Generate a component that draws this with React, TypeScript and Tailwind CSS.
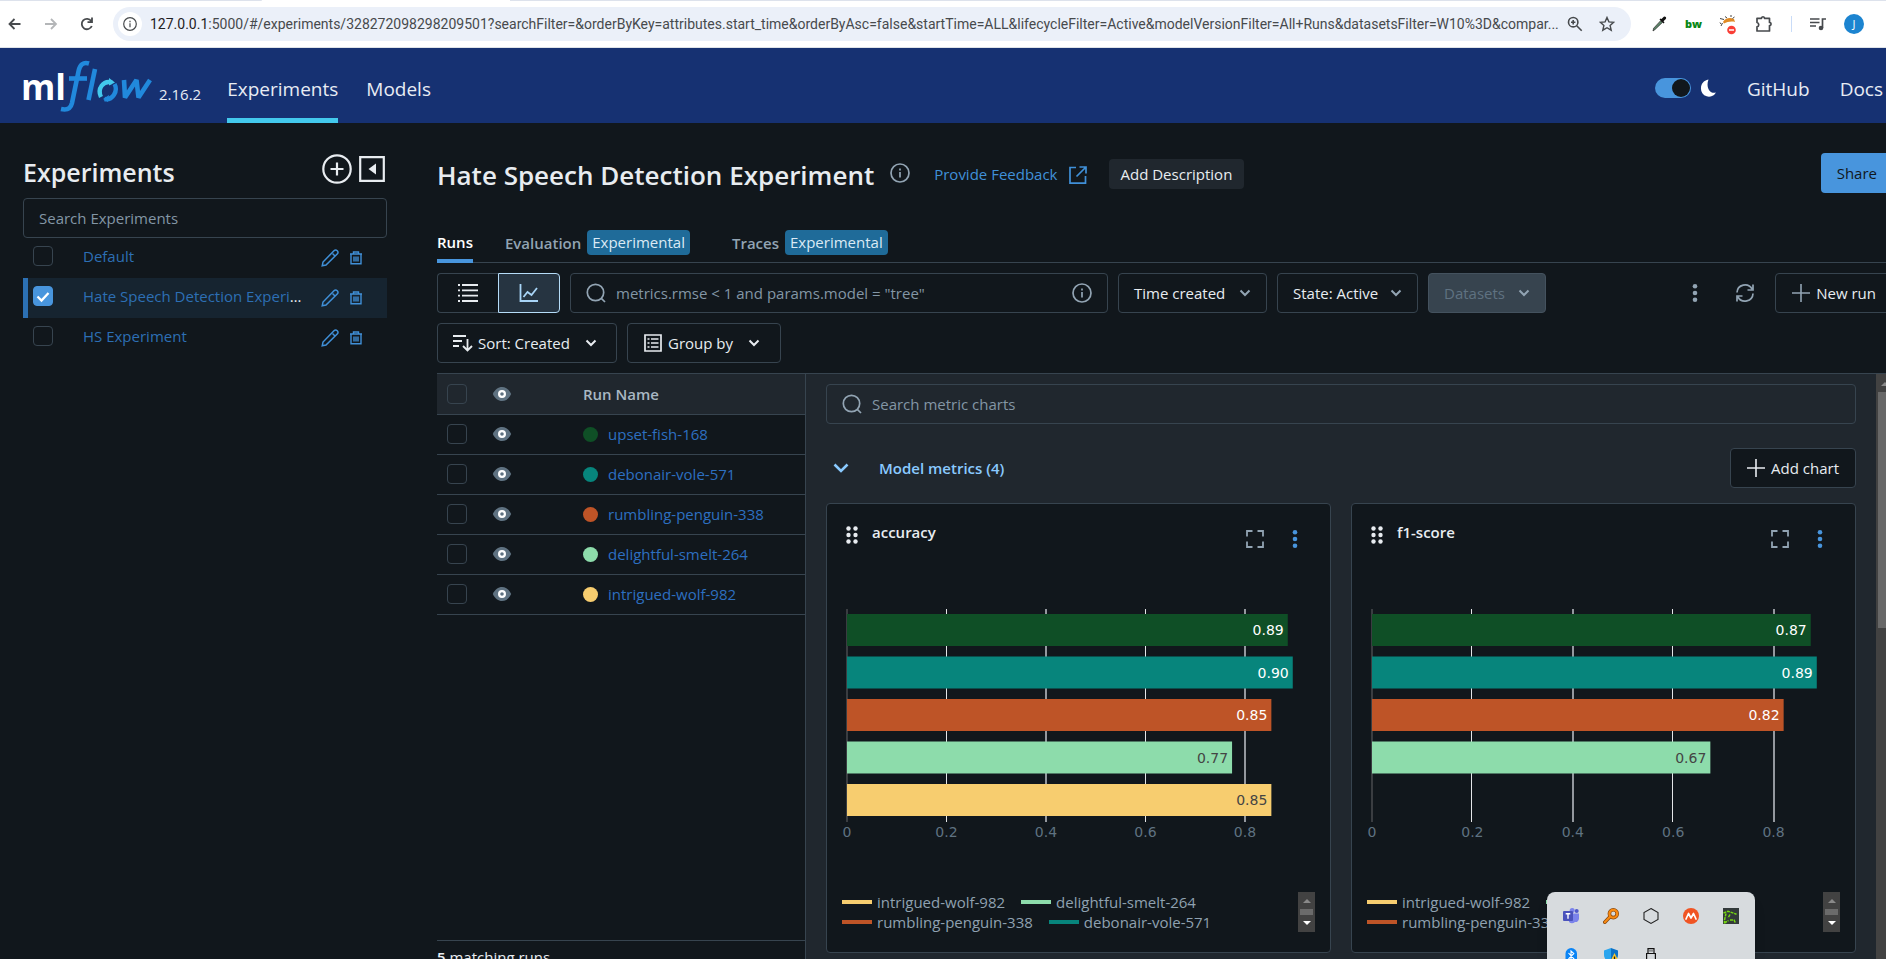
import React from 'react';

type Run = { name: string; color: string; ink: string };

const RUNS: Run[] = [
  { name: 'upset-fish-168', color: '#0f4f26', ink: '#ffffff' },
  { name: 'debonair-vole-571', color: '#07857c', ink: '#ffffff' },
  { name: 'rumbling-penguin-338', color: '#be5427', ink: '#ffffff' },
  { name: 'delightful-smelt-264', color: '#8ddcab', ink: '#444444' },
  { name: 'intrigued-wolf-982', color: '#f7cd6f', ink: '#444444' },
];

const EXPERIMENTS = [
  { name: 'Default', active: false },
  { name: 'Hate Speech Detection Experiment', active: true },
  { name: 'HS Experiment', active: false },
];

const BOX =
  'size-5 shrink-0 appearance-none rounded border border-[#37444f] bg-transparent';
const BTN =
  'flex h-10 shrink-0 items-center rounded border border-[#37444f] px-4 text-[15px] text-[#e8ecf0]';

function Chevron({ className }: { className: string }) {
  return (
    <svg viewBox="0 0 12 12" className={className} fill="none" stroke="currentColor" strokeWidth="2" aria-hidden="true">
      <path d="M1.500 3.500 6 8l4.500-4.500" />
    </svg>
  );
}

function InfoIcon({ className }: { className: string }) {
  return (
    <svg viewBox="0 0 20 20" className={className} fill="none" stroke="currentColor" strokeWidth="1.700" aria-hidden="true">
      <circle cx="10" cy="10" r="9" />
      <path d="M10 9v5.500M10 5.500v2" />
    </svg>
  );
}

function SearchIcon() {
  return (
    <svg viewBox="0 0 20 20" className="size-5 shrink-0 text-[#92a4b3]" fill="none" stroke="currentColor" strokeWidth="1.700" aria-hidden="true">
      <circle cx="9.500" cy="9.500" r="8.200" />
      <path d="m15.300 15.300 3.700 3.700" />
    </svg>
  );
}

function PlusIcon({ className }: { className: string }) {
  return (
    <svg viewBox="0 0 18 18" className={className} stroke="currentColor" strokeWidth="1.600" aria-hidden="true">
      <path d="M9 0v18M0 9h18" />
    </svg>
  );
}

function Kebab({ className }: { className: string }) {
  return (
    <svg viewBox="0 0 6 20" className={className} fill="currentColor" aria-hidden="true">
      <circle cx="3" cy="3.300" r="2.300" />
      <circle cx="3" cy="10" r="2.300" />
      <circle cx="3" cy="16.700" r="2.300" />
    </svg>
  );
}

function Eye() {
  return (
    <svg viewBox="0 0 20 16" className="h-4 w-5" aria-hidden="true">
      <path d="M.8 8C3 3.300 6.300 1 10 1s7 2.300 9.200 7C17 12.700 13.700 15 10 15S3 12.700.8 8Z" fill="#5f7281" />
      <circle cx="10" cy="8" r="2.900" fill="none" stroke="#fff" strokeWidth="2.200" />
    </svg>
  );
}

function BrowserBar() {
  return (
    <div className="shrink-0 border-b border-[#dfe3e8] bg-white">
      <div className="flex h-px">
        <div className="w-[262px] rounded-br bg-[#dde2ec]" />
        <div className="w-[248px]" />
        <div className="flex-1 bg-[#dde2ec]" />
      </div>
      <div className="flex h-[46px] items-center text-[#474a4d]">
        <button aria-label="Back" className="ml-[7px] size-4">
          <svg viewBox="0 0 16 16" fill="none" stroke="currentColor" strokeWidth="1.800"><path d="M13.500 8H2.500M7.500 3 2.500 8l5 5" /></svg>
        </button>
        <button aria-label="Forward" className="ml-5 size-4 text-[#b4b6b8]">
          <svg viewBox="0 0 16 16" fill="none" stroke="currentColor" strokeWidth="1.800"><path d="M2 8h11M8 3l5 5-5 5" /></svg>
        </button>
        <button aria-label="Reload" className="ml-5 size-4">
          <svg viewBox="0 0 16 16" fill="none" stroke="currentColor" strokeWidth="1.800"><path d="M12.800 10a5.200 5.200 0 1 1-.6-5M13 1.500v4.700H8.500" /></svg>
        </button>
        <div className="ml-[18px] flex h-[34px] min-w-0 flex-1 items-center rounded-full bg-[#ebf0f9] pr-4">
          <span className="ml-[5px] flex size-6 shrink-0 items-center justify-center rounded-full bg-white">
            <InfoIcon className="size-[14px]" />
          </span>
          <p className="ml-2 min-w-0 flex-1 overflow-hidden font-[Roboto,sans-serif] text-[14px] whitespace-nowrap">
            <span className="text-[#1f2124]">127.0.0.1</span>
            :5000/#/experiments/328272098298209501?searchFilter=&amp;orderByKey=attributes.start_time&amp;orderByAsc=false&amp;startTime=ALL&amp;lifecycleFilter=Active&amp;modelVersionFilter=All+Runs&amp;datasetsFilter=W10%3D&amp;compar...
          </p>
          <button aria-label="Zoom" className="ml-1 size-4">
            <svg viewBox="0 0 16 16" fill="none" stroke="currentColor" strokeWidth="1.600"><circle cx="6.200" cy="6.200" r="4.700" /><path d="m9.700 9.700 5 5M6.200 4v4.400M4 6.200h4.400" /></svg>
          </button>
          <button aria-label="Bookmark" className="ml-4 size-4">
            <svg viewBox="0 0 16 16" fill="none" stroke="currentColor" strokeWidth="1.400"><path d="m8 1.500 1.900 4.400 4.800.4-3.600 3.200 1.100 4.700L8 11.700l-4.200 2.500 1.100-4.700L1.300 6.300l4.800-.4Z" /></svg>
          </button>
        </div>
        <div className="ml-5 flex items-center gap-[18px] pr-[22px]">
          <svg viewBox="0 0 16 16" className="size-4" aria-hidden="true">
            <path d="m2 15 .7-2.800 7-7.500 1.700 1.700-7.300 7Z" fill="#5e8a6c" stroke="#333" strokeWidth=".8" />
            <path d="m8.500 3.500 4 4 1-1-1-1.200 2.300-2.300a1.500 1.500 0 0 0-2-2.200l-2.300 2.300-1-.7Z" fill="#111" />
          </svg>
          <span className="w-4 text-[11px] leading-4 font-extrabold text-[#0a8716]">bw</span>
          <svg viewBox="0 0 18 22" className="h-[22px] w-[18px]" aria-hidden="true">
            <path d="M4 9c2-4 7-5 11-3l1 3c-4-1-8 0-11 1.500Z" fill="#e08a24" />
            <path d="M1 5.500l4 1M2 13l1.500-3M6 3.500l2 1.500M12 2v2M15.500 4l-2 1.500M1 9.500l1 1.500" stroke="#444" strokeWidth="1" />
            <circle cx="12.500" cy="17" r="4.300" fill="#f93e36" />
            <path d="M10 17h5" stroke="#fff" strokeWidth="1.500" />
          </svg>
          <svg viewBox="0 0 18 18" className="size-[18px]" fill="none" stroke="currentColor" strokeWidth="1.700" strokeLinejoin="round" aria-hidden="true">
            <path d="M2 3.300h4.500V2.800a1.600 1.600 0 0 1 3 0v.5H14.500v4.200h.5a1.600 1.600 0 0 1 0 3h-.5V16H2v-4.200a2.200 2.200 0 0 0 0-4.300Z" />
          </svg>
          <span className="h-4 w-px bg-[#c9dcf8]" />
          <svg viewBox="0 0 16 16" className="size-4" fill="none" stroke="currentColor" strokeWidth="1.700" aria-hidden="true">
            <path d="M0 3h9.500M0 6.500h9.500M0 10h6M12.500 12V3H16" />
            <circle cx="11" cy="12" r="2.300" fill="currentColor" stroke="none" />
          </svg>
          <span className="flex size-5 items-center justify-center rounded-full bg-[#1c84d0] text-[11px] text-white">J</span>
        </div>
      </div>
    </div>
  );
}

function Logo() {
  return (
    <svg viewBox="0 0 130 52" className="h-[52px] w-[130px]" role="img" aria-label="mlflow">
      <text x="-2" y="40" fill="#fff" fontFamily="Open Sans, sans-serif" fontWeight="700" fontSize="35">ml</text>
      <g fill="none" stroke="#2189dc" strokeWidth="4.600">
        <path d="M66 3.500c-6-1.800-9 1.500-10.300 7L49 43c-1.200 5-4 7.500-11 6" />
        <path d="M46 18.500h18" />
        <path d="m72 9-6.500 31" />
        <path d="M101 20l1 17.500L113.500 20l2 17.500L127 20" strokeLinejoin="bevel" />
      </g>
      <g fill="none" strokeWidth="4.400">
        <path d="M78 37c-4-8 2-17 11-14.500" stroke="#43c9ed" />
        <path d="M91.500 24c4 7-2 16.500-10 15" stroke="#2189dc" />
      </g>
      <path d="m86 18 6 4.500-6 3Z" fill="#43c9ed" />
      <path d="m86 35-6 4 5 3Z" fill="#2189dc" />
    </svg>
  );
}

function Header() {
  return (
    <header className="flex h-[75px] shrink-0 bg-[#163172] pl-[23px] text-[19px] text-[#e8ecf4]">
      <div className="mt-3 flex h-[52px]">
        <Logo />
        <span className="mt-6 ml-[6px] text-[15px] leading-5">2.16.2</span>
      </div>
      <nav className="ml-[26px] flex gap-[28px]">
        <a href="#experiments" className="flex items-center border-b-[5px] border-[#43c9ed] pt-[13px]">Experiments</a>
        <a href="#models" className="flex items-center border-b-[5px] border-transparent pt-[13px]">Models</a>
      </nav>
      <div className="ml-auto flex items-center gap-[30px] pt-2 pr-[3px]">
        <div className="flex items-center gap-2 pb-[3px]">
          <button role="switch" aria-checked="true" aria-label="Dark mode" className="flex h-5 w-9 justify-end rounded-full bg-[#4895dd] p-px">
            <span className="size-[18px] rounded-full bg-[#11171c]" />
          </button>
          <svg viewBox="0 0 18 18" className="size-[18px]" fill="#fff" aria-hidden="true">
            <path d="M9.500.5C4.500 1.500 2 5 2 9a8 8 0 0 0 15 4.500C11 15.500 6.500 8.500 9.500.5Z" />
          </svg>
        </div>
        <a href="#github">GitHub</a>
        <a href="#docs">Docs</a>
      </div>
    </header>
  );
}

function Sidebar() {
  return (
    <aside className="w-[387px] shrink-0 pt-[31px] pl-[23px]">
      <div className="flex h-11 items-start">
        <h2 className="text-[25px] leading-9 font-semibold">Experiments</h2>
        <button aria-label="New experiment" className="ml-auto size-[30px]">
          <svg viewBox="0 0 30 30" fill="none" stroke="#e8ecf0" strokeWidth="2.200"><circle cx="15" cy="15" r="13.700" /><path d="M15 8.500v13M8.500 15h13" /></svg>
        </button>
        <button aria-label="Collapse sidebar" className="mt-[2px] ml-[7px] mr-[2px] size-[26px]">
          <svg viewBox="0 0 26 26" fill="none" stroke="#e8ecf0" strokeWidth="2.200"><path d="M1.200 1.200h23.600v23.600H1.200Z" /><path d="M17 7.500v11L9.500 13Z" fill="#e8ecf0" stroke="none" /></svg>
        </button>
      </div>
      <input
        aria-label="Search Experiments"
        placeholder="Search Experiments"
        className="h-10 w-full rounded border border-[#37444f] bg-transparent px-[15px] text-[15px] placeholder:text-[#8396a5]"
      />
      <ul>
        {EXPERIMENTS.map((e) => (
          <li
            key={e.name}
            className={
              e.active
                ? 'flex h-10 items-start border-l-[5px] border-[#2c70b3] bg-[#162430] pt-2 pl-[5px]'
                : 'flex h-10 items-start border-l-[5px] border-transparent pt-2 pl-[5px]'
            }
          >
            <span className="relative size-5 shrink-0">
              <input
                type="checkbox"
                aria-label={e.name}
                defaultChecked={e.active}
                className="block size-5 appearance-none rounded border border-[#37444f] checked:border-[#4895dd] checked:bg-[#4895dd]"
              />
              {e.active && (
                <svg viewBox="0 0 20 20" className="pointer-events-none absolute inset-0 size-5" fill="none" stroke="#fff" strokeWidth="2.300" aria-hidden="true">
                  <path d="m4.500 10.500 4 4 7-7.500" />
                </svg>
              )}
            </span>
            <div className="ml-[30px] w-[229px] truncate text-[15px] leading-5">
              <a href="#experiment" className="text-[#2d6fb4]">{e.name}</a>
            </div>
            <button aria-label={'Rename ' + e.name} className="mt-[3px] ml-[9px] size-[18px] text-[#4090d8]">
              <svg viewBox="0 0 18 18" fill="none" stroke="currentColor" strokeWidth="1.500"><path d="M1.200 16.800 2 13 13 1.800a2.200 2.200 0 0 1 3.200 3.200L5 16Z" /><path d="m11.500 4.500 2.700 2.700" /></svg>
            </button>
            <button aria-label={'Delete ' + e.name} className="mt-[4px] ml-[9px] size-4 text-[#4090d8]">
              <svg viewBox="0 0 16 16" fill="none" stroke="currentColor" strokeWidth="1.400"><path d="M2 4h12M5.500 4V2h5v2M3 4v9.800h10V4M6 6.500v5M8 6.500v5M10 6.500v5" /></svg>
            </button>
          </li>
        ))}
      </ul>
    </aside>
  );
}

function Badge() {
  return (
    <span className="ml-[6px] flex h-[25px] items-center rounded bg-[#1f6b99] px-[5px] font-medium text-[#dbeaf5]">Experimental</span>
  );
}

function TitleRow() {
  return (
    <div className="flex h-10 items-center">
      <h1 className="mt-[5px] text-[26px] font-semibold whitespace-nowrap">Hate Speech Detection Experiment</h1>
      <InfoIcon className="ml-4 size-5 text-[#92a4b3]" />
      <a href="#feedback" className="mt-[3px] ml-6 flex items-center gap-[11px] text-[15px] text-[#4090d8]">
        Provide Feedback
        <svg viewBox="0 0 18 18" className="size-[18px]" fill="none" stroke="currentColor" strokeWidth="1.700" aria-hidden="true">
          <path d="M7 1.500H1v15.700h15.500V10M10.500 1H17v6.500M17 1 7.500 10.500" />
        </svg>
      </a>
      <button className="ml-[22px] mt-[2px] h-[30px] rounded bg-[#20272e] px-3 text-[15px]">Add Description</button>
      <button className="ml-auto h-10 rounded bg-[#4895dd] px-4 text-[15px] text-[#11171c]">Share</button>
    </div>
  );
}

function Tabs() {
  return (
    <div role="tablist" className="mt-9 flex h-[34px] border-b border-[#37444f] text-[15px] leading-[27px] font-semibold text-[#92a4b3]">
      <button role="tab" aria-selected="true" className="h-[34px] border-b-4 border-[#4895dd] pb-[3px] text-white">Runs</button>
      <button role="tab" aria-selected="false" className="ml-8 flex pt-px">Evaluation<Badge /></button>
      <button role="tab" aria-selected="false" className="ml-[42px] flex pt-px">Traces<Badge /></button>
    </div>
  );
}

function Toolbar() {
  return (
    <>
      <div className="mt-[10px] flex items-center">
        <div className="flex h-10 w-[123px] shrink-0">
          <button aria-label="Table view" className="flex flex-1 items-center justify-center rounded-l border border-r-0 border-[#37444f]">
            <svg viewBox="0 0 20 18" className="h-[18px] w-5" stroke="#e8ecf0" strokeWidth="1.800" aria-hidden="true">
              <path d="M4 1h16M4 6.300h16M4 11.600h16M4 17h16M0 1h2M0 6.300h2M0 11.600h2M0 17h2" />
            </svg>
          </button>
          <button aria-label="Chart view" className="flex flex-1 items-center justify-center rounded-r border border-[#b5dcf8] bg-[#263441]">
            <svg viewBox="0 0 20 18" className="h-[18px] w-5" fill="none" stroke="#a9d5f7" strokeWidth="1.800" aria-hidden="true">
              <path d="M1.500 0v17H19M4.500 13l4-5 4 3 5.500-7" />
            </svg>
          </button>
        </div>
        <label className="ml-[10px] flex h-10 w-[538px] items-center rounded border border-[#37444f] px-[15px]">
          <SearchIcon />
          <input aria-label="Filter runs" placeholder={'metrics.rmse < 1 and params.model = "tree"'} className="ml-[10px] min-w-0 flex-1 bg-transparent text-[15px] placeholder:text-[#8396a5]" />
          <InfoIcon className="size-5 text-[#92a4b3]" />
        </label>
        <button className={BTN + ' ml-[10px] w-[149px] justify-between px-[15px]'}>Time created<Chevron className="size-3 text-[#92a4b3]" /></button>
        <button className={BTN + ' ml-[10px] w-[141px] justify-between px-[15px]'}>State: Active<Chevron className="size-3 text-[#92a4b3]" /></button>
        <button disabled className="ml-[10px] flex h-10 w-[118px] shrink-0 items-center justify-between rounded border border-[#44525e] bg-[#37444f] px-[15px] text-[15px] text-[#5f7281]">Datasets<Chevron className="size-3 text-[#92a4b3]" /></button>
        <button aria-label="More actions" className="ml-auto text-[#92a4b3]"><Kebab className="h-5 w-[6px]" /></button>
        <button aria-label="Refresh" className="ml-[37px] text-[#92a4b3]">
          <svg viewBox="0 0 20 20" className="size-5" fill="none" stroke="currentColor" strokeWidth="1.700" aria-hidden="true">
            <path d="M2 9.500a8 8 0 0 1 15-3.500M18 1.500V7h-5.500M18 10.500a8 8 0 0 1-15 3.500M2 18.500V13h5.500" />
          </svg>
        </button>
        <button className={BTN + ' ml-5'}><PlusIcon className="mr-[6px] size-[18px] text-[#92a4b3]" />New run</button>
      </div>
      <div className="mt-[10px] flex gap-[10px]">
        <button className={BTN + ' w-[180px] px-[15px]'}>
          <svg viewBox="0 0 20 18" className="mr-[5px] h-[18px] w-5" fill="none" stroke="#e8ecf0" strokeWidth="1.800" aria-hidden="true">
            <path d="M0 2h13M0 7h9M0 12h6M14.500 5v11M10 12l4.500 4.500L19 12" />
          </svg>
          Sort: Created
          <Chevron className="ml-[15px] size-3" />
        </button>
        <button className={BTN + ' w-[154px] px-4'}>
          <svg viewBox="0 0 18 18" className="mr-[6px] size-[18px]" fill="none" stroke="#e8ecf0" strokeWidth="1.700" aria-hidden="true">
            <path d="M1 1h16v16H1ZM3.500 5h2M7 5h7.500M3.500 9h2M7 9h7.500M3.500 13h2M7 13h7.500" />
          </svg>
          Group by
          <Chevron className="ml-[15px] size-3" />
        </button>
      </div>
    </>
  );
}

function RunsTable() {
  return (
    <section className="flex w-[369px] shrink-0 flex-col border-r border-[#37444f]">
      <table className="w-full table-fixed border-collapse text-left text-[15px]">
        <thead>
          <tr className="h-10 border-b border-[#37444f] bg-[#20272e] text-[#a9b7c3]">
            <th className="w-[55px] pl-[10px]"><input type="checkbox" aria-label="Select all runs" className={BOX + ' block'} /></th>
            <th className="w-[91px]"><Eye /></th>
            <th className="font-semibold">Run Name</th>
          </tr>
        </thead>
        <tbody>
          {RUNS.map((r) => (
            <tr key={r.name} className="h-10 border-b border-[#37444f]">
              <td className="pl-[10px]"><input type="checkbox" aria-label={'Select ' + r.name} className={BOX + ' block'} /></td>
              <td><Eye /></td>
              <td>
                <a href="#run" className="flex items-center gap-[10px] text-[#2d6fc0]">
                  <span className="size-[15px] rounded-full" style={{ background: r.color }} />
                  {r.name}
                </a>
              </td>
            </tr>
          ))}
        </tbody>
      </table>
      <p className="mt-auto -mb-2 border-t border-[#37444f] pt-[6px] text-[15px] leading-5"><b className="font-semibold">5</b> matching runs</p>
    </section>
  );
}

type ChartProps = {
  title: string;
  left: number;
  unit: number;
  values: (number | null)[];
};

function ScrollArrow({ up, fill }: { up: boolean; fill: string }) {
  return (
    <svg viewBox="0 0 8 4" className="h-1 w-2" fill={fill} aria-hidden="true">
      <path d={up ? 'M0 4 4 0l4 4Z' : 'M0 0l4 4 4-4Z'} />
    </svg>
  );
}

function LegendItem({ run }: { run: Run }) {
  return (
    <span className="flex items-center gap-[5px]">
      <span className="h-1 w-[30px]" style={{ background: run.color }} />
      {run.name}
    </span>
  );
}

function ChartCard({ title, left, unit, values }: ChartProps) {
  return (
    <article className="flex h-[450px] min-w-0 flex-1 flex-col rounded border border-[#37444f] bg-[#11171c]">
      <div className="flex h-[105px] pt-[18px] pr-8 pl-[19px]">
        <svg viewBox="0 0 12 18" className="mt-1 h-[18px] w-3" fill="#e8ecf0" aria-hidden="true">
          {[2.5, 9, 15.5].map((y) => (
            <g key={y}>
              <circle cx="2.500" cy={y} r="2.200" />
              <circle cx="9.500" cy={y} r="2.200" />
            </g>
          ))}
        </svg>
        <h3 className="ml-[14px] text-[15px] leading-5 font-semibold">{title}</h3>
        <button aria-label="Full screen" className="mt-2 ml-auto size-[18px] text-[#92a4b3]">
          <svg viewBox="0 0 18 18" fill="none" stroke="currentColor" strokeWidth="1.800"><path d="M1 6.500V1h5.500M11.500 1H17v5.500M17 11.500V17h-5.500M6.500 17H1v-5.500" /></svg>
        </button>
        <button aria-label="Chart options" className="mt-[7px] ml-7 h-5 text-[#4895dd]"><Kebab className="h-5 w-[6px]" /></button>
      </div>
      <svg viewBox="0 0 503 240" className="w-full" role="img" aria-label={title + ' by run'} fontFamily="DejaVu Sans, sans-serif" fontSize="14">
        {[0, 0.2, 0.4, 0.6, 0.8].map((t, i) => (
          <g key={t}>
            <rect
              x={Math.round(left + t * unit) - 1}
              y="0"
              width={i % 2 ? 1 : 2}
              height="213"
              fill={i === 0 ? '#3a3d41' : i % 2 ? '#e4e6e8' : '#94989e'}
            />
            <text x={left + t * unit} y="228" textAnchor="middle" fill="#5f7281">{t}</text>
          </g>
        ))}
        {values.map((v, i) =>
          v === null ? null : (
            <g key={RUNS[i].name}>
              <rect x={left} y={5 + i * 42.5} width={v * unit} height="32" fill={RUNS[i].color} />
              <text x={left + v * unit - 4} y={26 + i * 42.5} textAnchor="end" fill={RUNS[i].ink}>{v.toFixed(2)}</text>
            </g>
          ),
        )}
      </svg>
      <div className="mt-[43px] flex justify-between pr-[15px] pl-[15px]">
        <div className="text-[15px] leading-5 whitespace-nowrap text-[#8fa1b0]">
          <div className="flex gap-4"><LegendItem run={RUNS[4]} /><LegendItem run={RUNS[3]} /></div>
          <div className="flex gap-4"><LegendItem run={RUNS[2]} /><LegendItem run={RUNS[1]} /></div>
        </div>
        <div className="flex h-10 w-[17px] flex-col items-center justify-between bg-[#424242] py-[7px]">
          <ScrollArrow up fill="#8a8a8a" />
          <span className="h-[6px] w-[13px] bg-[#6b6b6b]" />
          <ScrollArrow up={false} fill="#fff" />
        </div>
      </div>
    </article>
  );
}

function ChartsPanel() {
  return (
    <section className="flex min-w-0 flex-1 bg-[#20272e]">
      <div className="min-w-0 flex-1 px-5 pt-[10px]">
        <label className="flex h-10 items-center rounded border border-[#37444f] px-[15px]">
          <SearchIcon />
          <input aria-label="Search metric charts" placeholder="Search metric charts" className="ml-[10px] min-w-0 flex-1 bg-transparent text-[15px] placeholder:text-[#8396a5]" />
        </label>
        <div className="mt-6 flex h-10 items-center">
          <button className="ml-[7px] flex items-center gap-[30px] text-[15px] font-semibold text-[#8acaff]">
            <svg viewBox="0 0 16 12" className="h-3 w-4" fill="none" stroke="currentColor" strokeWidth="2.600" aria-hidden="true"><path d="m1.500 2.500 6.500 6.500 6.500-6.500" /></svg>
            Model metrics (4)
          </button>
          <button className={BTN + ' ml-auto bg-[#11171c]'}><PlusIcon className="mr-[6px] size-[18px]" />Add chart</button>
        </div>
        <div className="mt-[15px] flex gap-5">
          <ChartCard title="accuracy" left={20} unit={497.5} values={[0.886, 0.896, 0.853, 0.774, 0.853]} />
          <ChartCard title="f1-score" left={20} unit={502} values={[0.874, 0.886, 0.82, 0.674, null]} />
        </div>
      </div>
      <div className="flex w-[17px] shrink-0 flex-col items-center bg-[#424242] pt-2">
        <ScrollArrow up fill="#8a8a8a" />
        <div className="mt-[6px] h-[236px] w-[13px] bg-[#686868]" />
      </div>
    </section>
  );
}

function Tray() {
  return (
    <div className="absolute right-[131px] bottom-0 h-[67px] w-[208px] overflow-hidden rounded-t-lg bg-[#d7dbde] px-4 pt-4 shadow-lg">
      <div className="grid grid-cols-5 gap-x-6 gap-y-6">
        <svg viewBox="0 0 16 16" className="size-4" role="img" aria-label="Teams">
          <circle cx="13.700" cy="3" r="2" fill="#5059c9" />
          <circle cx="9.200" cy="2.500" r="2.500" fill="#7b83eb" />
          <path d="M6 5.500h10v5a3.500 3.500 0 0 1-4 3.500A4.500 4.500 0 0 1 6 14Z" fill="#7b83eb" />
          <rect y="3" width="10" height="10" rx="1" fill="#4b53bc" />
          <path d="M2.700 5.700h4.600M5 5.700v5" stroke="#fff" strokeWidth="1.400" />
        </svg>
        <svg viewBox="0 0 16 16" className="size-4" fill="none" aria-hidden="true">
          <path d="M1.800 14.200 7 8.800" stroke="#8a4a10" strokeWidth="3.600" strokeLinecap="round" />
          <circle cx="10.300" cy="5.700" r="3.900" stroke="#8a4a10" strokeWidth="3.600" />
          <path d="M1.800 14.200 7 8.800" stroke="#f98a12" strokeWidth="2" strokeLinecap="round" />
          <circle cx="10.300" cy="5.700" r="3.900" stroke="#f98a12" strokeWidth="2.200" />
        </svg>
        <svg viewBox="0 0 16 16" className="size-4" fill="none" stroke="#222" strokeWidth="1.100" aria-hidden="true">
          <path d="m8 .6 7 3.900v7L8 15.400l-7-3.900v-7Z" />
        </svg>
        <svg viewBox="0 0 16 16" className="size-4" aria-hidden="true">
          <circle cx="8" cy="8" r="8" fill="#f05423" />
          <path d="M3 11 5.500 5.500 8 10l2.500-4.500L13 11" fill="none" stroke="#fff" strokeWidth="1.700" strokeLinejoin="round" strokeLinecap="round" />
        </svg>
        <svg viewBox="0 0 16 16" className="size-4" fill="none" aria-hidden="true">
          <path fill="#333a3a" d="M0 0h16v16H0Z" />
          <path d="M.5 5 5 3.200l8.500 3M3 5.500 1.500 12v3.500M7 6.500 5 10M1.500 15l4-2.500M7 12h4l1.500 3" stroke="#76d911" strokeWidth="1.500" strokeDasharray="3 .8" />
        </svg>
        <svg viewBox="0 0 16 16" className="size-4" aria-hidden="true">
          <rect x="2.500" width="11.500" height="16" rx="5.700" fill="#0a84f5" />
          <path d="m5.500 5 5.300 5.700L8 13V3l2.800 2.500L5.500 11" fill="none" stroke="#fff" strokeWidth="1.100" />
        </svg>
        <svg viewBox="0 0 16 16" className="size-4" aria-hidden="true">
          <path d="M1 2.500 8 0v16C3 13 1 10 1 7Z" fill="#2aa5ee" />
          <path d="M8 0l7 2.500V7c0 3-2 6-7 9Z" fill="#0b72c7" />
          <path d="m11.500 5 5 10H6.500Z" fill="#ffc928" />
          <path d="M11.500 8.500v3.500" stroke="#222" strokeWidth="1.300" />
        </svg>
        <svg viewBox="0 0 16 16" className="size-4" fill="none" stroke="#111" strokeWidth="1.200" aria-hidden="true">
          <path d="M5 5V.6h6V5M3.600 16V5.500h8.800V16M6.500 2.800h1M8.500 2.800h1" />
        </svg>
      </div>
    </div>
  );
}

export default function App() {
  return (
    <div className="relative flex h-screen flex-col overflow-hidden bg-[#11171c] font-['Open_Sans','Noto_Sans',sans-serif] text-[#e8ecf0]">
      <BrowserBar />
      <Header />
      <div className="flex min-h-0 flex-1">
        <Sidebar />
        <main className="-mr-[7px] ml-[50px] flex min-w-0 flex-1 flex-col pt-[30px]">
          <TitleRow />
          <Tabs />
          <Toolbar />
          <div className="mt-[10px] flex min-h-0 flex-1 border-t border-[#37444f]">
            <RunsTable />
            <ChartsPanel />
          </div>
        </main>
      </div>
      <Tray />
    </div>
  );
}
